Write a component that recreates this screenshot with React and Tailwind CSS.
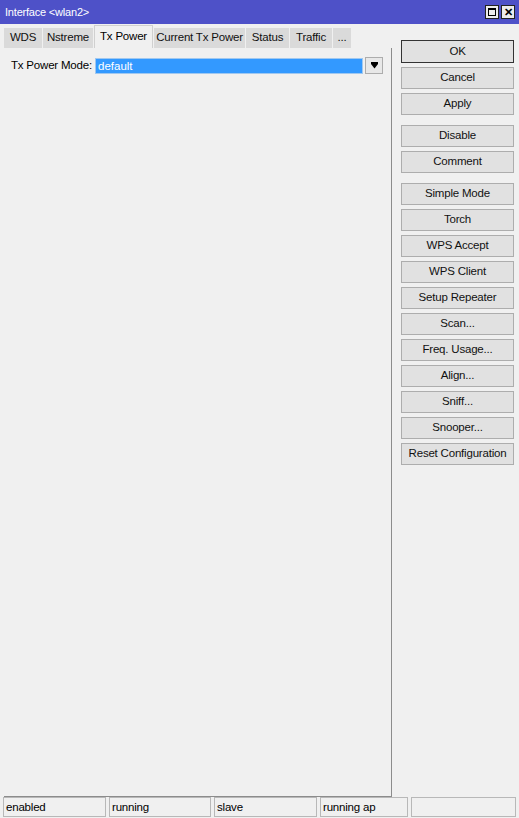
import React from 'react';

const buttonGroups = [
  ['OK', 'Cancel', 'Apply'],
  ['Disable', 'Comment'],
  ['Simple Mode', 'Torch', 'WPS Accept', 'WPS Client', 'Setup Repeater', 'Scan...', 'Freq. Usage...', 'Align...', 'Sniff...', 'Snooper...', 'Reset Configuration'],
];

const tabs = [
  { label: 'WDS', w: 'w-[38px]' },
  { label: 'Nstreme', w: 'w-[50px]' },
  { label: 'Tx Power', w: 'w-[59px]', active: true },
  { label: 'Current Tx Power', w: 'w-[91px]' },
  { label: 'Status', w: 'w-[43px]' },
  { label: 'Traffic', w: 'w-[42px]' },
  { label: '...', w: 'w-[18px]' },
];

const statusCells = [
  { text: 'enabled', w: 'w-[103px]' },
  { text: 'running', w: 'w-[102px]' },
  { text: 'slave', w: 'w-[103px]' },
  { text: 'running ap', w: 'w-[88px]' },
  { text: '', w: 'flex-1' },
];

function WinButton({ label, primary }) {
  return (
    <button
      className={
        'w-[113px] bg-[#e1e1e1] text-[11.5px] text-[#111] leading-none whitespace-nowrap tracking-[-0.2px] ' +
        (primary ? 'h-[23px] border border-[#333]' : 'h-[22px] border border-[#adadad]')
      }
    >
      {label}
    </button>
  );
}

export default function App() {
  return (
    <div
      className="w-[519px] h-[818px] bg-[#f0f0f0] flex flex-col overflow-hidden text-black"
      style={{ fontFamily: '"Liberation Sans", Arial, sans-serif' }}
    >
      {/* Title bar */}
      <div className="h-[24px] bg-[#4e51c8] flex items-center justify-between pl-[5px] pr-[4px] shrink-0">
        <span className="text-white text-[11px] tracking-[-0.2px]">Interface &lt;wlan2&gt;</span>
        <div className="flex gap-[2px]">
          <div className="w-[14px] h-[14px] bg-[#ececec] border border-[#222] flex items-center justify-center">
            <div className="w-[8px] h-[8px] border border-black border-t-2" />
          </div>
          <div className="w-[14px] h-[14px] bg-[#ececec] border border-[#222] flex items-center justify-center text-[11px] font-bold leading-none">
            ✕
          </div>
        </div>
      </div>

      <div className="flex flex-1 min-h-0">
        {/* Left: tabs + panel */}
        <div className="flex flex-col w-[392px] pl-[4px]">
          <div className="flex items-end h-[23px] mt-[1px]">
            {tabs.map((t) => (
              <div
                key={t.label}
                className={
                  t.w +
                  ' flex items-center justify-center text-[11.5px] tracking-[-0.2px] whitespace-nowrap mr-[1px] ' +
                  (t.active
                    ? 'h-[23px] bg-[#f0f0f0] border-t border-x border-[#d0d0d0]'
                    : 'h-[20px] bg-[#dadada] text-[#111]')
                }
              >
                {t.label}
              </div>
            ))}
          </div>
          <div className="flex-1 border-r border-b border-[#8c8c8c] bg-[#f0f0f0] pt-[9px]">
            <div className="flex items-center h-[17px]">
              <span className="text-[11.5px] tracking-[-0.2px] whitespace-nowrap ml-[7px] w-[84px]">Tx Power Mode:</span>
              <div className="w-[268px] h-[16px] bg-[#3399ff] border border-[#a0c8f0] text-white text-[11.5px] leading-[14px] pl-[2px]">
                default
              </div>
              <div className="ml-[2px] w-[18px] h-[17px] border border-[#adadad] bg-[#e8e8e8] flex flex-col items-center justify-center">
                <div className="w-[7px] h-[2px] bg-black" />
                <svg width="7" height="5" viewBox="0 0 7 5">
                  <path d="M0 0 H7 L3.5 4.5 Z" fill="black" />
                </svg>
              </div>
            </div>
          </div>
        </div>

        {/* Right: buttons */}
        <div className="flex flex-col pl-[9px] pt-[16px] gap-[10px]">
          {buttonGroups.map((g, gi) => (
            <div key={gi} className="flex flex-col gap-[4px]">
              {g.map((b) => (
                <WinButton key={b} label={b} primary={b === 'OK'} />
              ))}
            </div>
          ))}
        </div>
      </div>

      {/* Status bar */}
      <div className="h-[21px] flex gap-[3px] px-[3px] pb-[1px] shrink-0">
        {statusCells.map((c, i) => (
          <div
            key={i}
            className={c.w + ' h-[20px] border border-[#b8b8b8] text-[11.5px] tracking-[-0.2px] leading-[18px] pl-[2px]'}
          >
            {c.text}
          </div>
        ))}
      </div>
    </div>
  );
}
